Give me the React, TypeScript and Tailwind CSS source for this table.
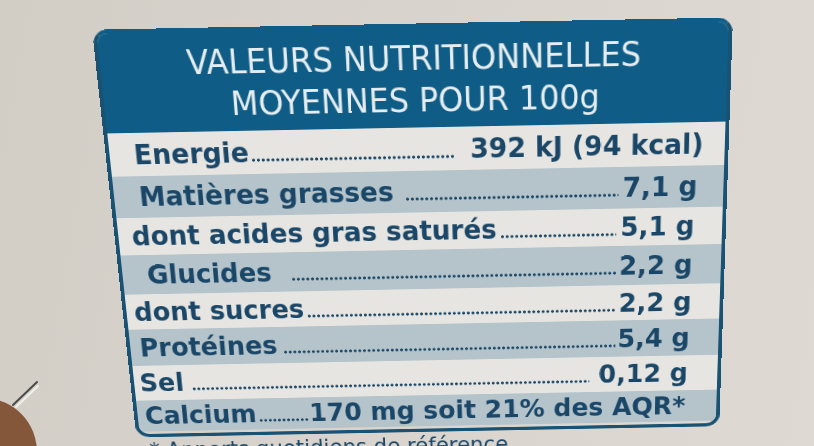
type Row = {
  label: string;
  value: string;
  stripe: boolean;
  h: string;
  pad: string;
  lead: string;
};

// per-row heights and insets follow the photo of the (slightly tapered) label
const rows: Row[] = [
  { label: 'Energie', value: '392 kJ (94 kcal)', stripe: false, h: 'h-[47px] leading-[47px]', pad: 'pl-[25px] pr-[22px]', lead: 'ml-[2px] mr-[16px]' },
  { label: 'Matières grasses', value: '7,1 g', stripe: true, h: 'h-[46px] leading-[46px]', pad: 'pl-[26px] pr-[27px]', lead: 'ml-[12px] mr-[4px]' },
  { label: 'dont acides gras saturés', value: '5,1 g', stripe: false, h: 'h-[42px] leading-[42px]', pad: 'pl-[14px] pr-[29px]', lead: 'ml-[3px] mr-[4px]' },
  { label: 'Glucides', value: '2,2 g', stripe: true, h: 'h-[45px] leading-[45px]', pad: 'pl-[26px] pr-[30px]', lead: 'ml-[20px] mr-[2px]' },
  { label: 'dont sucres', value: '2,2 g', stripe: false, h: 'h-[41px] leading-[41px]', pad: 'pl-[8px] pr-[30px]', lead: 'ml-[3px] mr-[2px]' },
  { label: 'Protéines', value: '5,4 g', stripe: true, h: 'h-[43px] leading-[43px]', pad: 'pl-[10px] pr-[31px]', lead: 'ml-[6px] mr-[2px]' },
  { label: 'Sel', value: '0,12 g', stripe: false, h: 'h-[42px] leading-[42px]', pad: 'pl-[6px] pr-[32px]', lead: 'ml-[8px] mr-[10px]' },
  { label: 'Calcium', value: '170 mg soit 21% des AQR*', stripe: true, h: 'h-[38px] leading-[38px]', pad: 'pl-[8px] pr-[34px]', lead: 'ml-[2px] mr-[2px]' },
];

function NutritionRow({ row }: { row: Row }) {
  return (
    <div
      className={`flex items-baseline whitespace-nowrap ${row.h} ${row.pad} ${
        row.stripe ? 'bg-[#b5c4cb]' : 'bg-[#e6e5e1]'
      }`}
    >
      <span>{row.label}</span>
      <div
        className={`h-[4px] flex-1 bg-[radial-gradient(circle,#1c4867_1.3px,transparent_1.9px)] bg-[length:5px_4px] bg-repeat-x ${row.lead}`}
      />
      <span>{row.value}</span>
    </div>
  );
}

export default function App() {
  return (
    <div className="relative h-[446px] w-[814px] overflow-hidden bg-[linear-gradient(100deg,#d2cdc5_0%,#d8d4cd_45%,#dedad3_100%)]">
      <div className="ml-[92px] mt-[22px] w-[641px] origin-[403px_0px] [transform:rotate(-1.1deg)_perspective(1000px)_rotateX(-12.5deg)]">
        <div className="h-[460px] overflow-hidden rounded-[15px] border-[4px] border-[#1a5273] border-t-[#0f5d86]">
          <div className="h-[105px] bg-[#0f5d86] pt-[10px] text-center font-['Liberation_Sans_Narrow','DejaVu_Sans_Condensed','Liberation_Sans',sans-serif] text-[36px] leading-[44px] text-[#e6edf0]">
            <div>VALEURS NUTRITIONNELLES</div>
            <div>MOYENNES POUR 100g</div>
          </div>
          <div className="font-['DejaVu_Sans_Condensed','Liberation_Sans',sans-serif] text-[30.5px] font-bold text-[#1a4667]">
            {rows.map((row) => (
              <NutritionRow key={row.label} row={row} />
            ))}
          </div>
        </div>
        <div className="ml-[13px] mt-[2px] font-['DejaVu_Sans_Condensed','Liberation_Sans',sans-serif] text-[26px] leading-[30px] text-[#1a4667]">
          * Apports quotidiens de référence
        </div>
      </div>

      <div className="absolute left-[-71px] top-[398px] h-[108px] w-[108px] rounded-full bg-[#85573a]" />
      <svg className="absolute left-0 top-[376px]" width="44" height="36" viewBox="0 0 44 36">
        <line x1="13" y1="29" x2="37" y2="6" stroke="#4b4b4b" strokeWidth="2" strokeLinecap="round" />
        <line x1="16" y1="31" x2="38" y2="10" stroke="#f1efea" strokeWidth="2" strokeLinecap="round" />
      </svg>
    </div>
  );
}
